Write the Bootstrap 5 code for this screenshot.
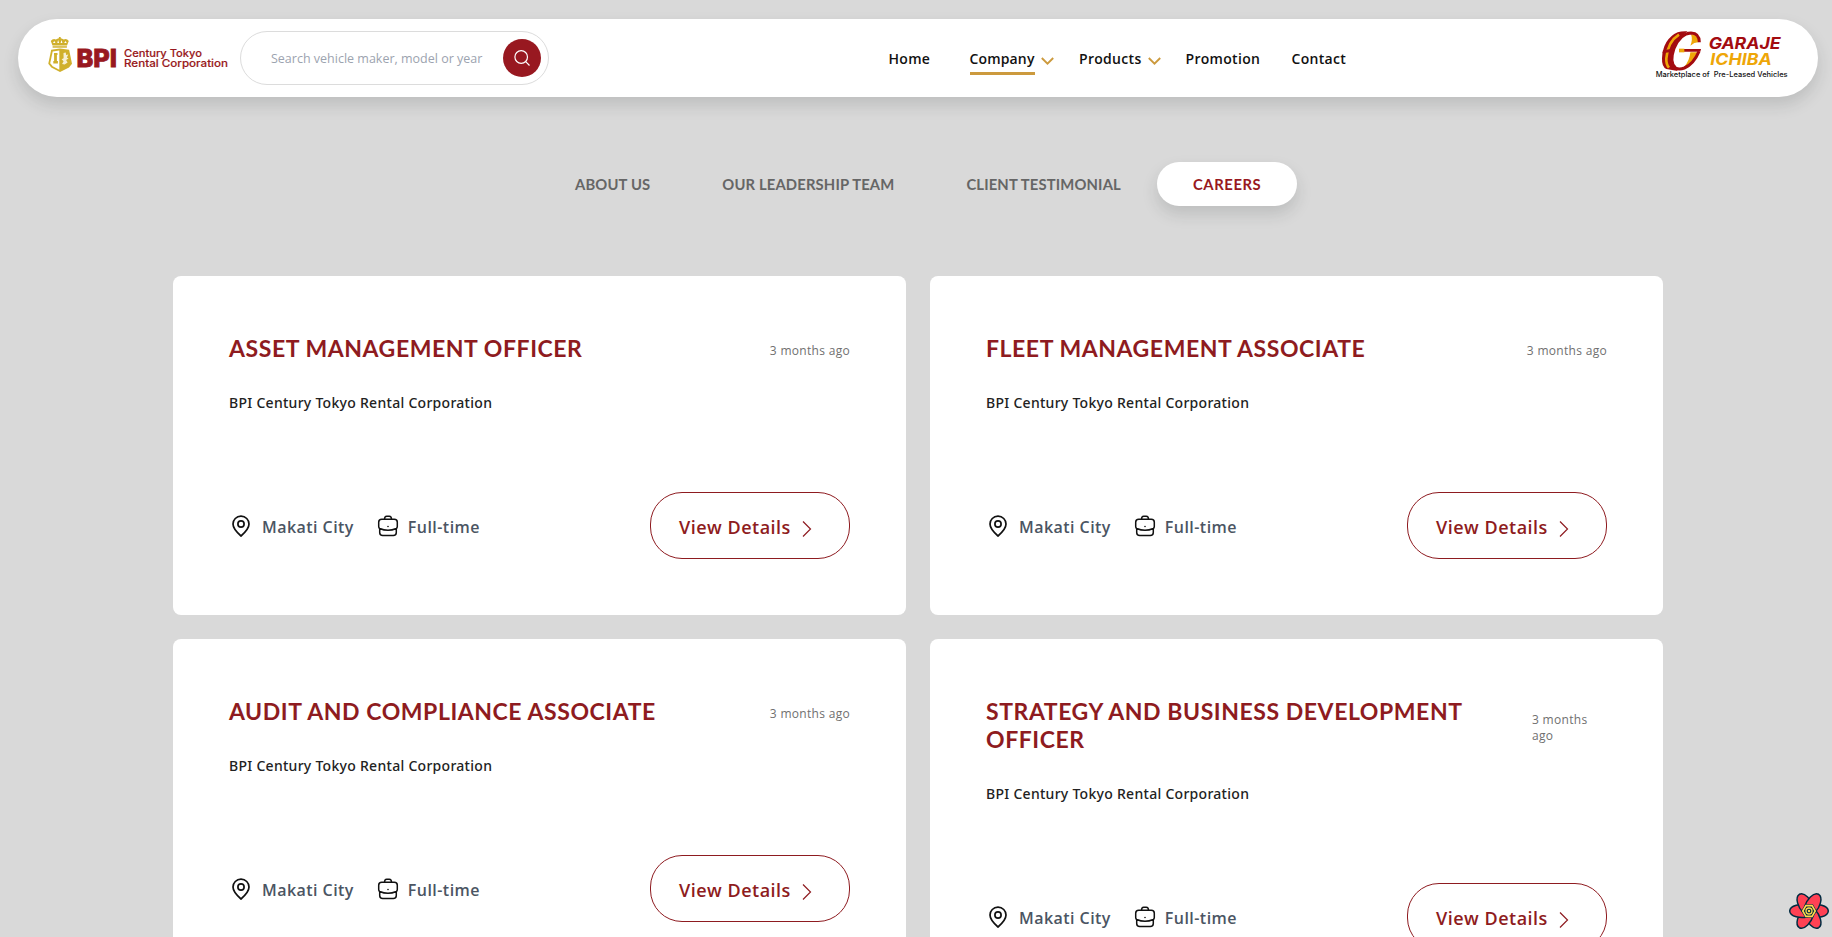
<!doctype html>
<html lang="en">
<head>
<meta charset="utf-8">
<meta name="viewport" content="width=device-width, initial-scale=1">
<title>Careers - BPI Century Tokyo Rental Corporation</title>
<link href="https://cdn.jsdelivr.net/npm/bootstrap@5.3.0/dist/css/bootstrap.min.css" rel="stylesheet">
<style>
  :root { --maroon: #8e1b20; --gold: #cc9a3e; }
  body { background: #d9d9d9; font-family: "Open Sans", "Noto Sans", sans-serif; height: 100vh; overflow: hidden; }
  .topbar { margin: 19px 14px 0 18px; height: 78px; border-radius: 39px; padding: 0 29px 0 29px; }
  .brand-logo { width: 182px; height: 40px; margin-top: -7px; }
  .search-box { width: 309px; height: 54px; margin-left: 11px; border: 1px solid #dcdcdc; border-radius: 27px; padding: 0 7px 0 30px; }
  .search-box input { border: 0; outline: 0; background: none; font-size: 12.5px; letter-spacing: 0; width: 230px; padding: 2px 0 0; color: #333; }
  .search-box input::placeholder { color: #9ca3af; opacity: 1; }
  .search-btn { width: 38px; height: 38px; background: #981820; border: 0; padding: 0; }
  .main-nav { margin-left: 339.500px; font-size: 14px; font-weight: 600; letter-spacing: .3px; padding-top: 2px; }
  .main-nav a { color: #111; text-decoration: none; line-height: 20px; position: relative; display: block; white-space: nowrap; }
  .main-nav a.active { letter-spacing: .15px; }
  .main-nav a.active::after { content: ""; position: absolute; left: 0; right: 0; top: 23px; height: 3px; background: var(--gold); }
  .main-nav svg { margin: 3px 0 0 auto; }
  .tabs { margin-top: 65px; padding-left: 539px; font-family: Lato, sans-serif; font-size: 14.800px; font-weight: 700; letter-spacing: .15px; }
  .tabs a { color: #666; text-decoration: none; line-height: 45px; padding: 0 36px; height: 44px; white-space: nowrap; }
  .tabs a.active { background: #fff; color: #981820; border-radius: 22px; letter-spacing: .6px; }
  .jobs { margin: 70px 0 0 173px; width: 1490px; height: 661px; overflow: hidden; display: grid; grid-template-columns: 1fr 1fr; gap: 24px; align-content: start; }
  .job { background: #fff; border-radius: 8px; padding: 57.5px 56px 56px 56px; }
  .job h2 { color: var(--maroon); font-family: Lato, sans-serif; font-size: 23px; font-weight: 700; line-height: 28px; letter-spacing: .56px; margin: 0; }
  .job .posted { color: #707070; font-size: 12px; line-height: 16px; letter-spacing: .3px; padding-top: 6px; white-space: nowrap; }
  .job .posted.narrow { width: 75px; white-space: normal; flex-shrink: 0; }
  .job .firm { color: #222; font-family: "Noto Sans", sans-serif; font-size: 14px; font-weight: 500; line-height: 24px; letter-spacing: .28px; margin: 29px 0 77.5px; }
  .job .meta { color: #4b5563; font-size: 16px; font-weight: 600; letter-spacing: .45px; line-height: 24px; }
  .job .meta svg { margin-right: 9px; }
  .job .meta svg + span { padding-top: 2px; }
  .job .meta span + svg { margin-left: 22px; margin-right: 8px; }
  .view-btn { width: 200px; height: 67px; border: 1px solid var(--maroon); border-radius: 32px; color: var(--maroon); font-size: 18px; font-weight: 600; letter-spacing: .5px; padding: 3px 0 0 28px; text-decoration: none; white-space: nowrap; }
  .view-btn svg { margin: 3px 0 0 10px; }
  .devtools { position: fixed; right: 2px; bottom: 6px; }
</style>
</head>
<body>

<svg width="0" height="0" class="position-absolute">
  <symbol id="pin" viewBox="0 0 24 24"><path d="M12 2.200c-4.600 0-8 3.500-8 7.900 0 4.700 3.400 8 8 11.900 4.600-3.900 8-7.200 8-11.900 0-4.400-3.400-7.900-8-7.900z" fill="none" stroke="#111" stroke-width="1.700"/><circle cx="12" cy="10" r="3.100" fill="none" stroke="#111" stroke-width="1.700"/></symbol>
  <symbol id="bag" viewBox="0 0 24 24"><g fill="none" stroke="#111" stroke-width="1.500"><path d="M8.500 5.500c0-2.500 1-3.200 2.200-3.200h2.600c1.200 0 2.200.7 2.200 3.200"/><path d="M3.700 14.500q-1-.5-1-2V8.300q0-3 3-3h12.600q3 0 3 3v4.200q0 1.500-1 2c-5 2.200-11.600 2.200-16.600 0zM3.700 14.500v4c0 2 1 3 3 3h10.600c2 0 3-1 3-3v-4"/></g><circle cx="12" cy="12.500" r=".8" fill="#111"/></symbol>
  <symbol id="next" viewBox="0 0 12 18"><path d="M2 1.500l7.500 7.500L2 16.500" fill="none" stroke="#8e1b20" stroke-width="1.200"/></symbol>
  <symbol id="down" viewBox="0 0 13 8"><path d="M.8 1L6.500 6.600l5.700-5.600" fill="none" stroke="#cc9a3e" stroke-width="1.900"/></symbol>
</svg>

<header class="topbar bg-white shadow d-flex align-items-center">
  <svg class="brand-logo flex-shrink-0" viewBox="47 35 182 40">
    <g fill="#d0b02c">
      <path d="M52.500 45.500L50.800 41q2-2.800 5-1.600l2.200-1 .9-.2V37h1.800v1.200l.9.200 2.200 1q3-1.200 5 1.600L67 45.500z"/>
      <path d="M52.600 46.200h14.300v1.500H52.600z"/>
      <path d="M60 48.500l-8.800 1.300-2.900 14 3 3.700L60 72l9-4.500 3-3.700-2.900-14z"/>
    </g>
    <path d="M53 43l1.200-2 1.300 2zM57.300 43l.8-3 1 3zM60.600 43l1-3 .8 3zM64.200 43l1.300-2 1.200 2z" fill="#fff"/>
    <path d="M59.300 50.500l-6.600 1-2.500 11.700 2.500 3 6.600 3.500z" fill="#fff"/>
    <path d="M54 53h3.500v2h-.6v6h1v2.500h-4.600V61h.8v-6H54z" fill="#d0b02c"/>
    <path d="M63.500 53l2.300-.6.300 2.500 2.200-.5-1.500 3 1.800 1-2.500 1.700 1.500 2.500-3 2-2.500-.6 1.500-2.700-2-2 2-1z" fill="#fff" opacity=".8"/>
    <g fill="#981820">
      <text x="76.500" y="66.500" font-family="Inter, sans-serif" font-size="24" font-weight="800" stroke="#981820" stroke-width=".8" textLength="40.500" lengthAdjust="spacingAndGlyphs">BPI</text>
      <text x="124" y="56.500" font-family="Inter, sans-serif" font-size="10.500" font-weight="500" stroke="#981820" stroke-width=".15" textLength="78" lengthAdjust="spacingAndGlyphs">Century Tokyo</text>
      <text x="124" y="66.500" font-family="Inter, sans-serif" font-size="10.500" font-weight="500" stroke="#981820" stroke-width=".15" textLength="104" lengthAdjust="spacingAndGlyphs">Rental Corporation</text>
    </g>
  </svg>
  <form class="search-box d-flex align-items-center justify-content-between flex-shrink-0">
    <input type="text" placeholder="Search vehicle maker, model or year" aria-label="Search">
    <button type="button" class="search-btn rounded-circle d-flex align-items-center justify-content-center" aria-label="Search">
      <svg width="18" height="18" viewBox="0 0 18 18" fill="none" stroke="#fff" stroke-width="1.200"><circle cx="8.200" cy="8" r="6.300"/><path d="M12.700 12.600L16.500 16.500"/></svg>
    </button>
  </form>
  <nav class="main-nav d-flex align-items-center">
    <a href="#" style="width:81px">Home</a>
    <div class="d-flex align-items-center" style="width:84px;margin-right:25.500px"><a href="#" class="active">Company</a><svg width="13" height="8"><use href="#down"/></svg></div>
    <div class="d-flex align-items-center" style="width:81.500px;margin-right:25px"><a href="#">Products</a><svg width="13" height="8"><use href="#down"/></svg></div>
    <a href="#" style="width:106px">Promotion</a>
    <a href="#">Contact</a>
  </nav>
  <svg class="ms-auto mb-2 flex-shrink-0" width="134" height="55" viewBox="16 14 402 165">
    <path d="M84 30Q40 50 37 108 36 134 50 140L84 146Q60 120 74 80 86 46 114 27 96 26 84 30z" fill="#a30b10"/>
    <path d="M88 37Q54 58 50 108 49 126 58 136" fill="none" stroke="#eea608" stroke-width="8"/>
    <path d="M40 84l24-4v9l-26 4z" fill="#a30b10"/>
    <path d="M124 36q22 1 22 24-12 0-24 10 8-18 2-34zM146 90Q132 122 102 136q18-20 20-46z" fill="#eea608"/>
    <path d="M149 60Q149 33 124 32 92 33 73 78 58 122 78 137q10 6 26 0 28-12 44-50" fill="none" stroke="#a30b10" stroke-width="9"/>
    <path d="M100 80h54l-2 8h-52z" fill="#a30b10"/>
    <path d="M88 79h16v11H88z" fill="#eea608"/>
    <g font-family="Inter, sans-serif" font-weight="700" font-style="italic">
      <text x="177" y="80" font-size="48" fill="#a30b10" textLength="216" lengthAdjust="spacingAndGlyphs">GARAJE</text>
      <text x="182" y="129" font-size="48" fill="#eea608" textLength="184" lengthAdjust="spacingAndGlyphs">ICHIBA</text>
    </g>
    <text x="18" y="165" font-size="21" font-family="Inter, sans-serif" font-weight="500" fill="#111" textLength="396" lengthAdjust="spacingAndGlyphs">Marketplace of &#160;Pre-Leased Vehicles</text>
  </svg>
</header>

<nav class="tabs d-flex">
  <a href="#">ABOUT US</a>
  <a href="#">OUR LEADERSHIP TEAM</a>
  <a href="#">CLIENT TESTIMONIAL</a>
  <a href="#" class="active shadow">CAREERS</a>
</nav>

<main class="jobs">
  <article class="job">
    <div class="d-flex justify-content-between align-items-center"><h2>ASSET MANAGEMENT OFFICER</h2><div class="posted">3 months ago</div></div>
    <p class="firm">BPI Century Tokyo Rental Corporation</p>
    <div class="d-flex align-items-center justify-content-between">
      <div class="meta d-flex align-items-center"><svg width="24" height="24"><use href="#pin"/></svg><span>Makati City</span><svg width="24" height="24"><use href="#bag"/></svg><span>Full-time</span></div>
      <a href="#" class="view-btn d-flex align-items-center">View Details<svg width="12" height="18"><use href="#next"/></svg></a>
    </div>
  </article>
  <article class="job">
    <div class="d-flex justify-content-between align-items-center"><h2>FLEET MANAGEMENT ASSOCIATE</h2><div class="posted">3 months ago</div></div>
    <p class="firm">BPI Century Tokyo Rental Corporation</p>
    <div class="d-flex align-items-center justify-content-between">
      <div class="meta d-flex align-items-center"><svg width="24" height="24"><use href="#pin"/></svg><span>Makati City</span><svg width="24" height="24"><use href="#bag"/></svg><span>Full-time</span></div>
      <a href="#" class="view-btn d-flex align-items-center">View Details<svg width="12" height="18"><use href="#next"/></svg></a>
    </div>
  </article>
  <article class="job">
    <div class="d-flex justify-content-between align-items-center"><h2>AUDIT AND COMPLIANCE ASSOCIATE</h2><div class="posted">3 months ago</div></div>
    <p class="firm">BPI Century Tokyo Rental Corporation</p>
    <div class="d-flex align-items-center justify-content-between">
      <div class="meta d-flex align-items-center"><svg width="24" height="24"><use href="#pin"/></svg><span>Makati City</span><svg width="24" height="24"><use href="#bag"/></svg><span>Full-time</span></div>
      <a href="#" class="view-btn d-flex align-items-center">View Details<svg width="12" height="18"><use href="#next"/></svg></a>
    </div>
  </article>
  <article class="job">
    <div class="d-flex justify-content-between align-items-center"><h2>STRATEGY AND BUSINESS DEVELOPMENT OFFICER</h2><div class="posted narrow">3 months ago</div></div>
    <p class="firm">BPI Century Tokyo Rental Corporation</p>
    <div class="d-flex align-items-center justify-content-between">
      <div class="meta d-flex align-items-center"><svg width="24" height="24"><use href="#pin"/></svg><span>Makati City</span><svg width="24" height="24"><use href="#bag"/></svg><span>Full-time</span></div>
      <a href="#" class="view-btn d-flex align-items-center">View Details<svg width="12" height="18"><use href="#next"/></svg></a>
    </div>
  </article>
</main>

<svg class="devtools" width="42" height="40" viewBox="-21 -20 42 40">
  <defs><path id="petal" d="M2-6C8-7.500 19-6 19.300 0 19 6 8 7.500 2 6z"/></defs>
  <g fill="#ff4154" stroke="#002b41" stroke-width="1.500">
    <use href="#petal"/><use href="#petal" transform="rotate(60)"/><use href="#petal" transform="rotate(120)"/><use href="#petal" transform="rotate(180)"/><use href="#petal" transform="rotate(240)"/><use href="#petal" transform="rotate(300)"/>
  </g>
  <path d="M-7.800 0l3.900-6.800h7.800L7.800 0 3.900 6.800h-7.800z" fill="#002b41"/>
  <path d="M-6.200 0l3.100-5.400h6.200L6.200 0 3.100 5.400h-6.200z" fill="none" stroke="#ffd94c" stroke-width="1.600"/>
  <circle r="3" fill="none" stroke="#ffd94c" stroke-width="1.300"/><circle r="1.200" fill="#ffd94c"/>
</svg>
<script src="https://cdn.jsdelivr.net/npm/bootstrap@5.3.0/dist/js/bootstrap.bundle.min.js"></script>
</body>
</html>
